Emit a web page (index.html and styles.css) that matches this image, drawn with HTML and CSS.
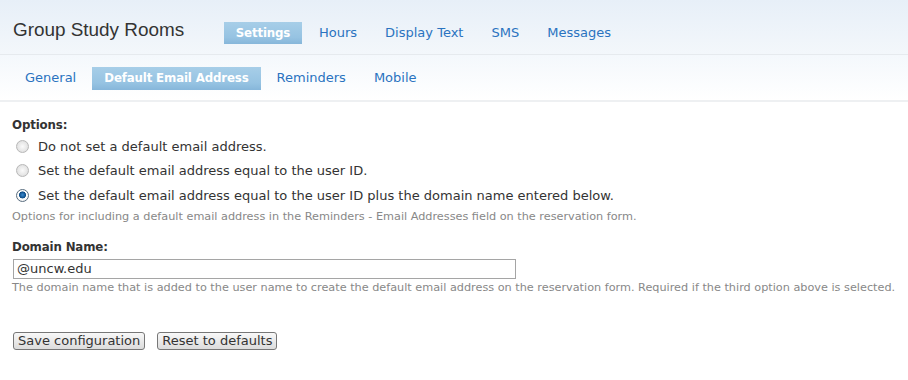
FILE: index.html
```html
<!DOCTYPE html>
<html>
<head>
<meta charset="utf-8">
<link rel="stylesheet" href="styles.css">
</head>
<body>
<div class="header">
  <h1 class="title">Group Study Rooms</h1>
  <ul class="tabs primary">
    <li><a class="active">Settings</a></li>
    <li><a>Hours</a></li>
    <li><a>Display Text</a></li>
    <li><a>SMS</a></li>
    <li><a>Messages</a></li>
  </ul>
</div>
<div class="subnav">
  <ul class="tabs secondary">
    <li><a>General</a></li>
    <li><a class="active">Default Email Address</a></li>
    <li><a>Reminders</a></li>
    <li><a>Mobile</a></li>
  </ul>
</div>
<form class="content">
  <div class="field">
    <div class="label">Options:</div>
    <label class="radio"><input type="radio" name="opt"> Do not set a default email address.</label>
    <label class="radio"><input type="radio" name="opt"> Set the default email address equal to the user ID.</label>
    <label class="radio"><input type="radio" name="opt" checked> Set the default email address equal to the user ID plus the domain name entered below.</label>
    <div class="desc">Options for including a default email address in the Reminders - Email Addresses field on the reservation form.</div>
  </div>
  <div class="field domain">
    <div class="label">Domain Name:</div>
    <input class="text" type="text" value="@uncw.edu">
    <div class="desc">The domain name that is added to the user name to create the default email address on the reservation form. Required if the third option above is selected.</div>
  </div>
  <div class="actions">
    <button type="button">Save configuration</button>
    <button type="button">Reset to defaults</button>
  </div>
</form>
</body>
</html>
```

FILE: styles.css
```css
html, body {
  margin: 0;
  padding: 0;
  background: #fff;
  font-family: "DejaVu Sans", Verdana, sans-serif;
  font-size: 13px;
  color: #333;
}

.header {
  display: flex;
  align-items: flex-start;
  height: 55px;
  border-bottom: 1px solid #e6eaee;
  background: linear-gradient(#e7eff8, #f3f7fb);
  box-sizing: border-box;
  padding-left: 13px;
}

.title {
  margin: 19px 0 0 0;
  font-family: "Liberation Sans", Arial, sans-serif;
  font-weight: normal;
  font-size: 18.9px;
  color: #333;
  width: 211px;
}

.tabs {
  list-style: none;
  margin: 0;
  padding: 0;
  display: flex;
}

.tabs a {
  display: block;
  color: #2a73c0;
  height: 22px;
  line-height: 22px;
  box-sizing: border-box;
  padding: 0 12px;
  margin-right: 4px;
}

.tabs a.active {
  color: #fff;
  font-weight: bold;
  font-size: 11.8px;
  letter-spacing: -0.15px;
  background: linear-gradient(#a7cee8, #96c3e2 70%, #86b6da);
}

.primary {
  margin-top: 22px;
}

.primary a {
  padding: 0 13px;
  margin-right: 2px;
}

.primary a.active {
  width: 78px;
  text-align: center;
  padding: 0;
  margin-right: 4px;
}

.subnav {
  height: 47px;
  border-bottom: 2px solid #eef0f2;
  box-sizing: border-box;
  background: linear-gradient(#f4f8fc, #fff);
  padding-left: 13px;
  padding-top: 12px;
}

.secondary a.active {
  height: 23px;
  line-height: 23px;
}

.content {
  padding: 16px 12px 0 12px;
}

.label {
  font-weight: bold;
  font-size: 11.8px;
  letter-spacing: -0.15px;
  line-height: 15px;
  margin-bottom: 1px;
}

.radio {
  display: flex;
  align-items: center;
  height: 24.5px;
  padding-left: 4px;
}

.radio input {
  appearance: none;
  -webkit-appearance: none;
  width: 13px;
  height: 13px;
  margin: 0 9px 0 0;
  border-radius: 50%;
  border: 1px solid #b8b8b8;
  background: radial-gradient(circle at 50% 50%, #fafafa 0, #e6e6e6 60%, #d4d4d4 100%);
  box-sizing: border-box;
}

.radio input:checked {
  border-color: #5a6e80;
  background: radial-gradient(circle at 50% 45%, #3a8ad0 0, #0b4b86 3.2px, #ffffff 3.8px, #e6e6e6 100%);
}

.desc {
  font-size: 11.25px;
  color: #888;
  line-height: 13px;
  margin-top: 2px;
}

.domain {
  margin-top: 17px;
}

.domain .label {
  margin-bottom: 4px;
}

.text {
  display: block;
  width: 503px;
  height: 20px;
  box-sizing: border-box;
  border: 1px solid #a5a5a5;
  padding: 0 3px;
  margin: 0 0 1px 1px;
  font-family: "DejaVu Sans", Verdana, sans-serif;
  font-size: 13px;
  color: #333;
}

.actions {
  margin-top: 38px;
  display: flex;
  gap: 12px;
  padding-left: 1px;
}

.actions button {
  font-family: "DejaVu Sans", Verdana, sans-serif;
  font-size: 13px;
  color: #333;
  height: 18px;
  padding: 0 4px;
  line-height: 16px;
  border: 1px solid #777;
  border-radius: 3px;
  background: linear-gradient(#f8f8f8, #dcdcdc);
}
```
